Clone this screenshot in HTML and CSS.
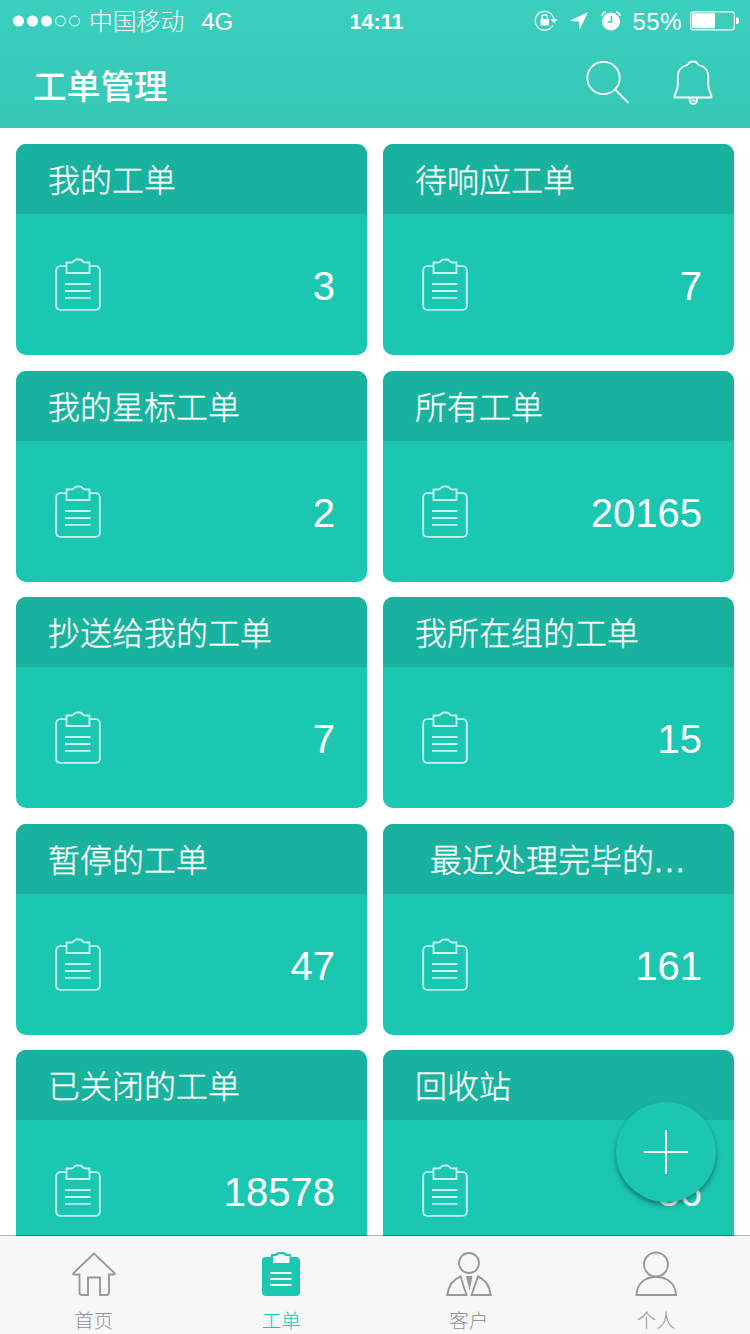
FILE: index.html
```html
<!DOCTYPE html>
<html lang="zh-CN">

<head>
    <meta charset="UTF-8">
    <title>工单管理</title>
    <link rel="stylesheet" href="styles.css">
</head>

<body>
    <!-- shared icons -->
    <svg class="sprite" width="0" height="0">
        <symbol id="clipboard" viewBox="0 0 46 54">
            <path d="M11.5 8.2H5.5Q1.2 8.2 1.2 12.5V47.5Q1.2 51.8 5.5 51.8H40.5Q44.8 51.8 44.8 47.5V12.5Q44.8 8.2 40.5 8.2H34.5" />
            <path d="M11.5 4.5H16Q18 4.500 19 3Q20 1.500 22 1.500H24.500Q26.500 1.500 27.500 3Q28.500 4.500 30.500 4.500H34.500V15H11.500Z" />
            <path d="M10 26H35.500M10 33H35.500M10 39.800H35.500" />
        </symbol>
    </svg>

    <div class="app">
        <header class="top">
            <div class="status-bar">
                <div class="status-left">
                    <svg class="signal" width="68" height="12" viewBox="0 0 68 12">
                        <circle cx="5.500" cy="6" r="5.500" fill="#fff" />
                        <circle cx="19.500" cy="6" r="5.500" fill="#fff" />
                        <circle cx="33.500" cy="6" r="5.500" fill="#fff" />
                        <circle cx="47.500" cy="6" r="5" fill="none" stroke="#fff" />
                        <circle cx="61.500" cy="6" r="5" fill="none" stroke="#fff" />
                    </svg>
                    <span class="carrier">中国移动</span>
                    <span class="network">4G</span>
                </div>
                <div class="time">14:11</div>
                <div class="status-right">
                    <svg class="lock" width="24" height="22" viewBox="0 0 24 22">
                        <path d="M18.800 15.500A9.400 9.400 0 1 1 20 10" fill="none" stroke="#fff" stroke-width="1.300" />
                        <path d="M16.500 9.300H23.500L20 13.300Z" fill="#fff" />
                        <rect x="6.500" y="9" width="8.500" height="6.500" rx=".8" fill="#fff" />
                        <path d="M8 9.500V7.500A2.750 2.750 0 0 1 13.500 7.500V9.500" fill="none" stroke="#fff" stroke-width="1.300" />
                    </svg>
                    <svg class="arrow" width="20" height="20" viewBox="0 0 20 20">
                        <path d="M19 1L10.500 19L10 10.500L.5 10Z" fill="#fff" />
                    </svg>
                    <svg class="alarm" width="20" height="20" viewBox="0 0 20 20">
                        <circle cx="10" cy="10.500" r="9" fill="#fff" />
                        <path d="M10.500 5V11H6.500" fill="none" stroke="#37cab8" stroke-width="1.500" />
                        <path d="M1 5Q1.200 1.500 5 1M15 1Q18.800 1.500 19 5" fill="none" stroke="#fff" stroke-width="1.500" />
                    </svg>
                    <span class="percent">55%</span>
                    <svg class="battery" width="50" height="20" viewBox="0 0 50 20">
                        <rect x=".6" y=".8" width="43.800" height="18" rx="2.500" fill="none" stroke="#fff" stroke-width="1.200" />
                        <rect x="2" y="2.300" width="23" height="15" rx="1" fill="#fff" />
                        <path d="M46 6.500H47Q49 6.500 49 9.800Q49 13 47 13H46Z" fill="#fff" />
                    </svg>
                </div>
            </div>
            <div class="nav">
                <h1 class="nav-title">工单管理</h1>
                <div class="nav-icons">
                    <svg width="44" height="46" viewBox="0 0 44 46">
                        <circle cx="17.500" cy="18" r="16.200" />
                        <path d="M29 29.500L42.500 43" />
                    </svg>
                    <svg width="40" height="46" viewBox="0 0 40 46">
                        <path d="M1.500 37.500H38.500Q38.500 35 37 32Q35.300 29 35.300 24V17Q35.300 7.500 26 5Q24.500 4.500 24 3Q23 1.500 20 1.500Q17 1.500 16 3Q15.500 4.500 14 5Q4.800 7.500 4.800 17V24Q4.800 29 3 32Q1.500 35 1.500 37.500Z" />
                        <path d="M16.700 38V40Q16.700 43.800 20.300 43.800T24 40V38M18.500 40.500H22.500" />
                    </svg>
                </div>
            </div>
        </header>

        <main class="cards">
            <a class="card">
                <h2>我的工单</h2>
                <div class="card-body"><svg class="clip"><use href="#clipboard" /></svg><span>3</span></div>
            </a>
            <a class="card">
                <h2>待响应工单</h2>
                <div class="card-body"><svg class="clip"><use href="#clipboard" /></svg><span>7</span></div>
            </a>
            <a class="card">
                <h2>我的星标工单</h2>
                <div class="card-body"><svg class="clip"><use href="#clipboard" /></svg><span>2</span></div>
            </a>
            <a class="card">
                <h2>所有工单</h2>
                <div class="card-body"><svg class="clip"><use href="#clipboard" /></svg><span>20165</span></div>
            </a>
            <a class="card">
                <h2>抄送给我的工单</h2>
                <div class="card-body"><svg class="clip"><use href="#clipboard" /></svg><span>7</span></div>
            </a>
            <a class="card">
                <h2>我所在组的工单</h2>
                <div class="card-body"><svg class="clip"><use href="#clipboard" /></svg><span>15</span></div>
            </a>
            <a class="card">
                <h2>暂停的工单</h2>
                <div class="card-body"><svg class="clip"><use href="#clipboard" /></svg><span>47</span></div>
            </a>
            <a class="card">
                <h2 class="long">最近处理完毕的<span class="dots">...</span></h2>
                <div class="card-body"><svg class="clip"><use href="#clipboard" /></svg><span>161</span></div>
            </a>
            <a class="card">
                <h2>已关闭的工单</h2>
                <div class="card-body"><svg class="clip"><use href="#clipboard" /></svg><span>18578</span></div>
            </a>
            <a class="card">
                <h2>回收站</h2>
                <div class="card-body"><svg class="clip"><use href="#clipboard" /></svg><span>36</span></div>
            </a>
        </main>

        <button class="add">
            <svg width="44" height="44" viewBox="0 0 44 44">
                <path d="M22 0V44M0 22H44" stroke="#fff" stroke-width="2" />
            </svg>
        </button>

        <nav class="tabs">
            <a class="tab">
                <svg width="46" height="46" viewBox="0 0 46 46">
                    <path d="M23 1.500L2.500 21Q1.500 22.500 3.500 22.500H8.500V40.500Q8.500 43 11 43H17V25.500H29V43H35.500Q38 43 38 40.500V22.500H42.500Q44.500 22.500 43.500 21Z" />
                </svg>
                <span>首页</span>
            </a>
            <a class="tab active">
                <svg width="46" height="46" viewBox="0 0 46 46">
                    <path class="solid" d="M8 5H13V2H17Q19 0 21 0H25Q27 0 29 2H33V5H38Q42 5 42 9V40Q42 44 38 44H8Q4 44 4 40V9Q4 5 8 5Z" />
                    <path class="hole" d="M15 4H18.500Q20.500 2 22 2H24Q25.500 2 27.500 4H31.500V11H15Z" />
                    <path class="rule" d="M12 21H33.500M12 27H33.500M12 33H33.500" />
                </svg>
                <span>工单</span>
            </a>
            <a class="tab">
                <svg width="46" height="46" viewBox="0 0 46 46">
                    <circle cx="23" cy="11" r="10" />
                    <path d="M14.500 24.500Q3 29 1.300 43H20.500ZM32 24.500Q43 29 44.700 43H25.500Z" />
                    <path d="M20 24H26.500L23.500 39Z" class="tie" />
                </svg>
                <span>客户</span>
            </a>
            <a class="tab">
                <svg width="46" height="46" viewBox="0 0 46 46">
                    <circle cx="23" cy="12.500" r="12" />
                    <path d="M3.500 43C4 32 11 25 23 25S42.500 32 43 43Z" />
                </svg>
                <span>个人</span>
            </a>
        </nav>
    </div>
</body>

</html>
```

FILE: styles.css
```css
* {
    box-sizing: border-box;
}

body {
    margin: 0;
    background-color: #fff;
    font-family: "Liberation Sans", "Noto Sans CJK SC", sans-serif;
    font-weight: 300;
}

svg {
    display: block;
    flex: none;
}

h1,
h2 {
    margin: 0;
}

.sprite {
    position: absolute;
}

.app {
    position: relative;
    display: flex;
    flex-direction: column;
    width: 750px;
    height: 1334px;
    overflow: hidden;
}

/* top */
.top {
    flex: none;
    height: 128px;
    background: linear-gradient(#3bcfbd, #36c7b5);
    color: #fff;
}

.status-bar {
    display: grid;
    grid-template-columns: 1fr auto 1fr;
    align-items: center;
    height: 40px;
    padding: 0 10px 0 13px;
    font-size: 24px;
    line-height: 40px;
}

.status-left,
.status-right {
    display: flex;
    align-items: center;
}

.status-left span,
.percent,
.time {
    padding-top: 2px;
}

.status-right {
    justify-content: flex-end;
}

.carrier {
    margin-left: 8px;
    font-size: 23.800px;
}

.network {
    margin-left: 17px;
}

.time {
    font-size: 21.500px;
    font-weight: bold;
}

.arrow {
    margin-left: 11px;
}

.alarm {
    margin-left: 12px;
}

.percent {
    margin: 0 8px 0 11px;
    letter-spacing: 0.5px;
}

.nav {
    display: flex;
    justify-content: space-between;
    align-items: center;
    height: 88px;
    padding: 0 37px 0 33px;
}

.nav-title {
    padding-top: 5px;
    font-size: 33.700px;
    font-weight: 500;
    line-height: 50px;
}

.nav-icons {
    display: flex;
    gap: 43px;
    padding-bottom: 3px;
}

.nav-icons svg {
    fill: none;
    stroke: #fff;
    stroke-width: 1.800;
}

/* cards */
.cards {
    flex: 1;
    min-height: 0;
    margin-bottom: -1px;
    overflow: hidden;
    display: grid;
    grid-template-columns: 1fr 1fr;
    grid-auto-rows: 211px;
    gap: 15.500px 16px;
    padding: 16px 16px 0;
}

.card {
    display: flex;
    flex-direction: column;
    border-radius: 10px;
    overflow: hidden;
    background-color: #1bc7b1;
    color: #fff;
}

.card h2 {
    height: 70px;
    padding-left: 32px;
    background-color: #19b29e;
    font-size: 32px;
    font-weight: 300;
    line-height: 74px;
    white-space: nowrap;
    -webkit-text-stroke: 0.3px #fff;
}

.card h2.long {
    padding-left: 47px;
}

.dots {
    letter-spacing: 2px;
}

.card-body {
    flex: 1;
    display: flex;
    justify-content: space-between;
    align-items: center;
    padding: 1px 32px 0 39px;
    font-size: 40px;
}

.card-body span {
    padding-top: 3px;
}

.clip {
    width: 46px;
    height: 54px;
    fill: none;
    stroke: #c4f9ef;
    stroke-width: 1.800;
}

.add {
    position: absolute;
    right: 34px;
    bottom: 132px;
    display: flex;
    justify-content: center;
    align-items: center;
    width: 100px;
    height: 100px;
    padding: 0;
    border: none;
    border-radius: 50%;
    background-color: #1bc7b1;
    box-shadow: 0 3px 5px rgba(0, 0, 0, 0.4);
}

/* bottom tabs */
.tabs {
    position: relative;
    flex: none;
    display: flex;
    height: 99px;
    border-top: 1px solid rgba(0, 0, 0, 0.3);
    background-color: #f7f7f7;
    background-clip: padding-box;
}

.tab {
    flex: 1;
    display: flex;
    flex-direction: column;
    align-items: center;
    padding-top: 16px;
    color: #929292;
    font-size: 19.500px;
    line-height: 30px;
}

.tab span {
    margin-top: 8px;
}

.tab svg {
    fill: none;
    stroke: #999;
    stroke-width: 1.900;
    overflow: visible;
}

.tab .tie {
    fill: #999;
    stroke: none;
}

.tab.active {
    color: #1bc7b1;
}

.active .solid {
    fill: #1bc7b1;
    stroke: none;
}

.active .hole {
    fill: #f7f7f7;
    stroke: none;
}

.active .rule {
    stroke: #f7f7f7;
}
```
